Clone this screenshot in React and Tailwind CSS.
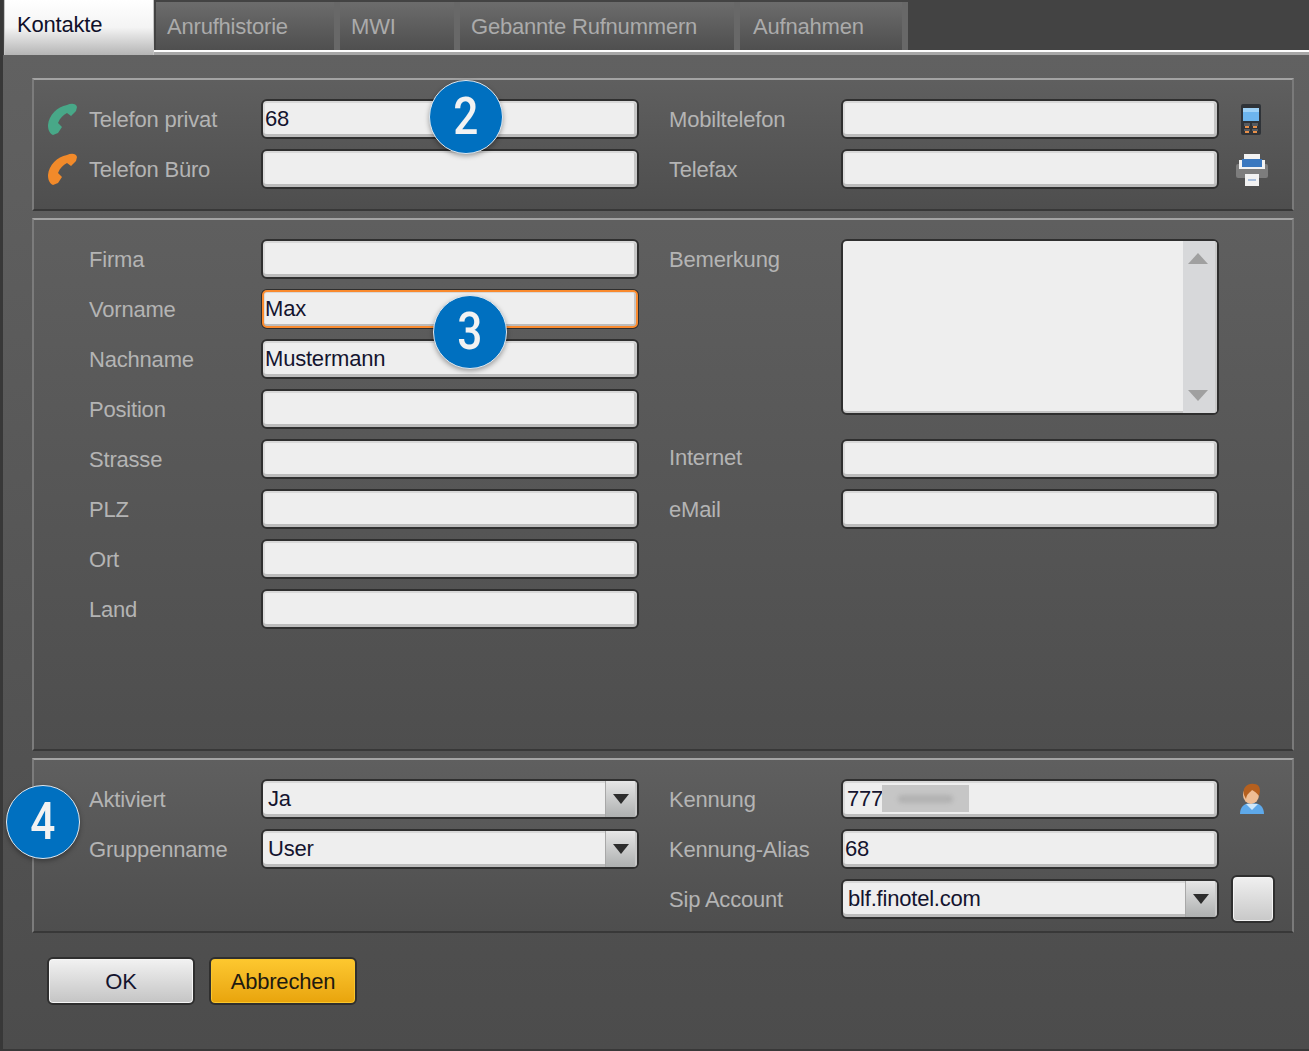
const font = { fontFamily: '"Liberation Sans", Arial, sans-serif' };

function PhoneIcon({ color }) {
  return (
    <svg width="32" height="32" viewBox="0 0 32 32" className="block">
      <path
        d="M1 22 C2 12 10 4 20 2 C24 0 29 0 30 4 L29 8 L24 13 L20 10 C16 12 13 15 11 20 L15 24 L11 30 L6 32 C2 30 1 26 1 22 Z"
        fill={color}
      />
    </svg>
  );
}

function MobileIcon() {
  return (
    <svg width="24" height="32" viewBox="0 0 24 32" className="block">
      <rect x="2" y="1" width="20" height="31" rx="2" fill="#2f3338" />
      <rect x="4" y="5" width="16" height="13" fill="#6db5ee" />
      <rect x="4" y="5" width="16" height="4" fill="#9fd2f7" />
      <rect x="5" y="20" width="6" height="3" fill="#555a60" />
      <rect x="13" y="20" width="6" height="3" fill="#555a60" />
      <rect x="6" y="23" width="4" height="2" fill="#e8904a" />
      <rect x="14" y="23" width="4" height="2" fill="#e8904a" />
      <rect x="5" y="26" width="6" height="2" fill="#555a60" />
      <rect x="13" y="26" width="6" height="2" fill="#555a60" />
      <rect x="6" y="28" width="4" height="2" fill="#e8904a" />
      <rect x="14" y="28" width="4" height="2" fill="#e8904a" />
    </svg>
  );
}

function PrinterIcon() {
  return (
    <svg width="34" height="34" viewBox="0 0 34 34" className="block">
      <rect x="1" y="12" width="32" height="14" rx="2" fill="#7d7d7d" />
      <rect x="9" y="2" width="16" height="8" fill="#f2f2f2" />
      <rect x="4" y="8" width="26" height="9" fill="#f2f2f2" />
      <rect x="7" y="7" width="20" height="8" fill="#3a78bf" />
      <rect x="10" y="22" width="14" height="12" fill="#f2f2f2" />
      <rect x="13" y="27" width="8" height="2" fill="#a9bfdc" />
    </svg>
  );
}

function UserIcon() {
  return (
    <svg width="26" height="32" viewBox="0 0 26 32" className="block">
      <path d="M1 31 C1 23 6 20 13 20 C20 20 25 23 25 31 Z" fill="#5ea9ea" />
      <path d="M7 21 L19 21 L13 27 Z" fill="#cfe8fa" />
      <ellipse cx="12" cy="12" rx="8" ry="9" fill="#eebd94" />
      <path d="M5 12 C3 4 9 0 15 1 C21 1 22 7 20 13 C18 10 15 8 13 7 C11 10 8 10 7 16 Z" fill="#b5601f" />
    </svg>
  );
}

function Label({ children, className = "" }) {
  return <span className={`pt-[2px] text-[22px] leading-none tracking-[-0.2px] text-[#b4b4b4] ${className}`}>{children}</span>;
}

function Field({ value, focused, children, className = "h-10" }) {
  return (
    <div
      className={`relative flex items-center rounded-[6px] border-2 border-[#2f2f2f] bg-[#eeeeee] pb-[2px] pl-[2px] text-[22px] tracking-[-0.2px] text-[#14142e] shadow-[inset_0_2px_0_#d8d8d8,inset_0_-3px_0_#bcbcbc,inset_2px_0_0_#dcdcdc,inset_-3px_0_0_#c6c6c6] ${
        focused ? "outline-2 -outline-offset-3 outline-[#f98a2e]" : ""
      } ${className}`}
    >
      {value}
      {children}
    </div>
  );
}

function Select({ value }) {
  return (
    <div className="relative flex h-10 items-center overflow-hidden rounded-[6px] border-2 border-[#2f2f2f] bg-[#eeeeee] pl-[5px] text-[22px] tracking-[-0.2px] text-[#14142e] shadow-[inset_0_2px_0_#d8d8d8,inset_0_-3px_0_#bcbcbc]">
      <span className="flex-1 pb-[2px]">{value}</span>
      <div className="flex h-full w-[32px] items-center justify-center border-r-2 border-l border-r-[#c8c8c8] border-l-[#a8a8a8] bg-linear-to-b from-[#e6e6e6] to-[#aeb0b0]">
        <svg width="18" height="12" viewBox="0 0 18 12"><path d="M1 1 H17 L9 11 Z" fill="#2c2c2c" /></svg>
      </div>
    </div>
  );
}

function Panel({ className = "", children }) {
  return (
    <section
      className={`border-2 border-t-[#a3a3a3] border-r-[#7a7a7a] border-b-[#383838] border-l-[#7c7c7c] bg-linear-to-b from-[#5f5f5f] to-[#4e4e4e] ${className}`}
    >
      {children}
    </section>
  );
}

function FormRow({ icon, label, field, label2, field2, extra }) {
  return (
    <div className="grid h-10 grid-cols-[227px_378px_30px_172px_378px_1fr] grid-rows-[40px] items-center">
      <div className="flex items-center">
        <div className="flex w-[55px] justify-end pr-[10px]">{icon}</div>
        <Label>{label}</Label>
      </div>
      <div>{field}</div>
      <div />
      <Label>{label2}</Label>
      <div>{field2}</div>
      <div>{extra}</div>
    </div>
  );
}

function Badge({ n, className }) {
  return (
    <div
      className={`absolute z-20 flex h-[74px] w-[74px] items-center justify-center rounded-full border border-[#dfe8f0] bg-[#0070c0] shadow-[0_2px_5px_rgba(0,0,0,0.35)] ${className}`}
    >
      <span className="inline-block scale-x-85 text-[52px] leading-none font-medium text-[#f2f2f2]" style={{ fontFamily: "Roboto, sans-serif" }}>
        {n}
      </span>
    </div>
  );
}

function Tab({ children, className }) {
  return (
    <div className={`flex h-[48px] items-center border-r-[6px] border-[#686868] bg-linear-to-b from-[#6c6c6c] to-[#4f4f4f] text-[22px] tracking-[-0.2px] text-[#ababab] ${className}`}>
      {children}
    </div>
  );
}

export default function App() {
  const leftRows = ["Firma", "Vorname", "Nachname", "Position", "Strasse", "PLZ", "Ort", "Land"];

  return (
    <div className="relative h-[1051px] w-[1309px] overflow-hidden border-b-2 border-l-[3px] border-[#383838] bg-[#555555]" style={font}>
      <header className="flex h-[55px] bg-[#434343]">
        <div className="z-10 ml-px flex h-[55px] w-[150px] items-center border-x border-[#c4c4c4] bg-linear-to-b from-white via-[#f4f4f4] to-[#b5b5b5] pb-[6px] pl-[12px] text-[22px] tracking-[-0.2px] text-[#10102a]">
          Kontakte
        </div>
        <div className="flex flex-1 flex-col">
          <div className="flex h-[50px] items-end">
            <Tab className="ml-[2px] w-[184px] pl-[11px]">Anrufhistorie</Tab>
            <Tab className="w-[120px] pl-[11px]">MWI</Tab>
            <Tab className="w-[280px] pl-[11px]">Gebannte Rufnummern</Tab>
            <Tab className="w-[168px] border-r-[3px] pl-[13px]">Aufnahmen</Tab>
          </div>
          <div className="h-[2px] bg-white" />
          <div className="h-[3px] bg-[#a8a8a8]" />
        </div>
      </header>

      <main className="h-[994px] bg-linear-to-b from-[#616161] to-[#4c4c4c] pt-[23px] pl-[29px]">
        <Panel className="h-[133px] w-[1262px] pt-[19px]">
          <div className="flex flex-col gap-[10px]">
            <FormRow
              icon={<PhoneIcon color="#48a888" />}
              label="Telefon privat"
              field={<Field value="68" />}
              label2="Mobiltelefon"
              field2={<Field />}
              extra={<div className="pl-[20px]"><MobileIcon /></div>}
            />
            <FormRow
              icon={<PhoneIcon color="#f28a2a" />}
              label="Telefon Büro"
              field={<Field />}
              label2="Telefax"
              field2={<Field />}
              extra={<div className="pl-[16px]"><PrinterIcon /></div>}
            />
          </div>
        </Panel>

        <Panel className="mt-[7px] h-[533px] w-[1262px] pt-[19px]">
          <div className="grid grid-cols-[605px_30px_172px_378px]">
            <div className="flex flex-col gap-[10px]">
              {leftRows.map((label) => (
                <div key={label} className="grid h-10 grid-cols-[227px_378px] items-center">
                  <Label className="pl-[55px]">{label}</Label>
                  {label === "Vorname" && <Field value="Max" focused />}
                  {label === "Nachname" && <Field value="Mustermann" />}
                  {label !== "Vorname" && label !== "Nachname" && <Field />}
                </div>
              ))}
            </div>
            <div />
            <div className="flex flex-col">
              <Label className="mt-[8px]">Bemerkung</Label>
              <Label className="mt-[174px]">Internet</Label>
              <Label className="mt-[28px]">eMail</Label>
            </div>
            <div className="flex flex-col">
              <div className="flex h-[176px] overflow-hidden rounded-[6px] border-2 border-[#2f2f2f] bg-[#eeeeee] shadow-[inset_0_-2px_0_#c4c4c4]">
                <div className="flex-1" />
                <div className="flex w-[34px] flex-col items-center justify-between border-r-2 border-[#c8c8c8] bg-[#d7d8da] py-[12px] pr-[2px]">
                  <svg width="20" height="11" viewBox="0 0 20 11"><path d="M10 0 L20 11 H0 Z" fill="#a0a0a0" /></svg>
                  <svg width="20" height="11" viewBox="0 0 20 11"><path d="M0 0 H20 L10 11 Z" fill="#a0a0a0" /></svg>
                </div>
              </div>
              <Field className="mt-6 h-10" />
              <Field className="mt-[10px] h-10" />
            </div>
          </div>
        </Panel>

        <Panel className="mt-[7px] h-[175px] w-[1262px] pt-[19px]">
          <div className="flex flex-col gap-[10px]">
            <FormRow
              label="Aktiviert"
              field={<Select value="Ja" />}
              label2="Kennung"
              field2={
                <Field
                  value={
                    <div className="flex h-[27px] items-center pl-[2px]">
                      <span className="w-[35px]">777</span>
                      <div className="h-full w-[87px] bg-[#c6c6c6]">
                        <div className="mx-4 mt-[10px] h-[8px] rounded-full bg-[#b2b2b2] blur-[2px]" />
                      </div>
                    </div>
                  }
                />
              }
              extra={<div className="pl-[20px]"><UserIcon /></div>}
            />
            <FormRow
              label="Gruppenname"
              field={<Select value="User" />}
              label2="Kennung-Alias"
              field2={<Field value="68" />}
            />
            <FormRow
              label2="Sip Account"
              field2={<Select value="blf.finotel.com" />}
              extra={
                <div className="pl-[12px]">
                  <div className="h-[48px] w-[44px] rounded-[6px] border-2 border-[#2f2f2f] bg-linear-to-b from-[#f0f0f0] to-[#c8c8c8] shadow-[inset_0_0_0_1px_#f4f4f4]" />
                </div>
              }
            />
          </div>
        </Panel>

        <div className="mt-6 flex gap-[14px] pl-[15px]">
          <button className="h-[48px] w-[148px] rounded-[6px] border-2 border-[#2f2f2f] bg-linear-to-b from-[#f2f2f2] to-[#c4c4c4] text-[22px] tracking-[-0.2px] text-[#14142e] shadow-[inset_0_0_0_1px_#f6f6f6]">
            OK
          </button>
          <button className="h-[48px] w-[148px] rounded-[6px] border-2 border-[#2f2f2f] bg-linear-to-b from-[#fdc82f] to-[#e8a40a] text-[22px] tracking-[-0.2px] text-[#1e1a10] shadow-[inset_0_0_0_1px_#f9c62c]">
            Abbrechen
          </button>
        </div>
      </main>

      <Badge n="2" className="left-[426px] top-[80px]" />
      <Badge n="3" className="left-[430px] top-[295px]" />
      <Badge n="4" className="left-[3px] top-[785px]" />
    </div>
  );
}
